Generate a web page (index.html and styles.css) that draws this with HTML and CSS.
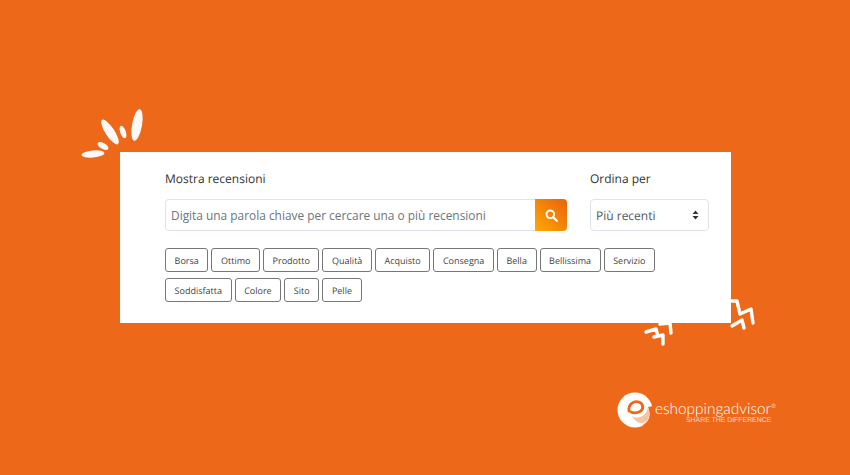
FILE: index.html
```html
<!DOCTYPE html>
<html lang="en">

<head>
    <meta charset="UTF-8">
    <meta name="viewport" content="width=device-width, initial-scale=1.0">
    <title>Mostra recensioni</title>
    <link rel="stylesheet" href="styles.css">
</head>

<body>
    <svg class="doodle" width="850" height="475" viewBox="0 0 850 475">
        <g fill="#fbf9f7">
            <ellipse cx="137" cy="125" rx="5" ry="16" transform="rotate(10 137 125)"/>
            <ellipse cx="110" cy="132" rx="4.5" ry="14.5" transform="rotate(-33 110 132)"/>
            <ellipse cx="123" cy="132" rx="2.8" ry="6.5" transform="rotate(-20 123 132)"/>
            <ellipse cx="103" cy="146" rx="6" ry="3" transform="rotate(30 103 146)"/>
            <ellipse cx="93" cy="154" rx="11.5" ry="3.5" transform="rotate(-5 93 154)"/>
        </g>
        <g fill="none" stroke="#fff" stroke-width="3.4" stroke-linecap="round" stroke-linejoin="round">
            <polyline points="732,301 737,301 740,314 751,309 753,323"/>
            <polyline points="732,326 742,320 744,328"/>
            <polyline points="646,332 656,329 658,336 654,337 663,335 663,344"/>
            <polyline points="660,324 670,323 671,333"/>
        </g>
    </svg>

    <div class="card">
        <div class="filters">
            <div class="search-col">
                <label class="field-label">Mostra recensioni</label>
                <div class="search-box">
                    <input class="search-input" type="text" placeholder="Digita una parola chiave per cercare una o più recensioni">
                    <button class="search-btn">
                        <svg width="13" height="13" viewBox="0 0 13 13">
                            <circle cx="5.3" cy="5.3" r="3.8" fill="none" stroke="#fff" stroke-width="1.9"/>
                            <line x1="8.2" y1="8.2" x2="11.8" y2="11.8" stroke="#fff" stroke-width="2.2" stroke-linecap="round"/>
                        </svg>
                    </button>
                </div>
            </div>
            <div class="sort-col">
                <label class="field-label">Ordina per</label>
                <div class="sort-box">
                    <span>Più recenti</span>
                    <svg width="7" height="10" viewBox="0 0 7 10">
                        <path d="M3.5 0.5 L6.5 4 H0.5 Z M3.5 9.5 L6.5 6 H0.5 Z" fill="#333"/>
                    </svg>
                </div>
            </div>
        </div>
        <div class="tags">
            <a class="tag">Borsa</a>
            <a class="tag">Ottimo</a>
            <a class="tag">Prodotto</a>
            <a class="tag">Qualità</a>
            <a class="tag">Acquisto</a>
            <a class="tag">Consegna</a>
            <a class="tag">Bella</a>
            <a class="tag">Bellissima</a>
            <a class="tag">Servizio</a>
            <a class="tag">Soddisfatta</a>
            <a class="tag">Colore</a>
            <a class="tag">Sito</a>
            <a class="tag">Pelle</a>
        </div>
    </div>

    <div class="logo">
        <svg class="logo-mark" width="37" height="37" viewBox="0 0 37 37">
            <circle cx="18" cy="18" r="17.5" fill="#fff"/>
            <path d="M31 15 C34 22 33 29 26 33 L36 33 L36 14 Z" fill="#ed6818"/>
            <path d="M12 19 C11 12 17 8.5 22 10 C27 12 27 18 22 20 C19 21 16 21 14 20" fill="none" stroke="#ed6818" stroke-width="2.8" stroke-linecap="round"/>
            <path d="M15 24 C22 28 29 24 31 15 C34 22 32 29 26 31 C22 32 18 29 15 24 Z" fill="#f7c4a3"/>
        </svg>
        <div class="logo-text">
            <div class="logo-name">eshoppingadvisor<sup>®</sup></div>
            <div class="logo-tag">SHARE THE DIFFERENCE</div>
        </div>
    </div>
</body>

</html>
```

FILE: styles.css
```css
body {
    font-family: 'Open Sans', Arial, sans-serif;
    background-color: #ed6818;
    color: #333;
    margin: 0;
    height: 475px;
    overflow: hidden;
    padding-top: 152px;
    box-sizing: border-box;
    text-rendering: geometricPrecision;
}

.doodle {
    position: absolute;
    top: 0;
    left: 0;
}

.card {
    width: 611px;
    height: 171px;
    margin-left: 120px;
    padding: 17px 22px 0 45px;
    box-sizing: border-box;
    background-color: #fff;
}

.filters {
    display: flex;
    gap: 23px;
}

.search-col {
    width: 402px;
}

.sort-col {
    width: 119px;
}

.field-label {
    display: block;
    font-size: 12px;
    line-height: 20px;
    margin-bottom: 10px;
    color: #333;
}

.search-box {
    display: flex;
    height: 32px;
}

.search-input {
    flex: 1;
    min-width: 0;
    box-sizing: border-box;
    height: 32px;
    padding: 0 5px;
    font-family: inherit;
    font-size: 11.9px;
    border: 1px solid #dfe4ec;
    border-right: none;
    border-radius: 4px 0 0 4px;
    outline: none;
}

.search-input::placeholder {
    color: #6c757d;
    opacity: 1;
}

.search-btn {
    width: 32px;
    height: 32px;
    padding: 0;
    border: none;
    border-radius: 0 4px 4px 0;
    background: linear-gradient(to top right, #ffa905, #e8620c);
    display: flex;
    align-items: center;
    justify-content: center;
}

.sort-box {
    height: 32px;
    box-sizing: border-box;
    border: 1px solid #dfe4ec;
    border-radius: 4px;
    padding: 0 9px 0 5px;
    display: flex;
    align-items: center;
    justify-content: space-between;
    font-size: 12px;
    color: #555;
}

.tags {
    display: flex;
    flex-wrap: wrap;
    gap: 6px 3px;
    margin-top: 17px;
}

.tag {
    height: 24px;
    box-sizing: border-box;
    padding: 0 8.6px;
    border: 1px solid #777;
    border-radius: 3px;
    font-size: 9px;
    line-height: 23px;
    color: #444;
}

.logo {
    margin: 69px 0 0 617px;
    display: flex;
    align-items: flex-start;
    color: #fff;
}

.logo-text {
    margin-left: 1px;
}

.logo-name {
    font-family: 'Lato', Arial, sans-serif;
    font-size: 15.4px;
    font-weight: 300;
    line-height: 16px;
    margin-top: 9px;
    white-space: nowrap;
}

.logo-name sup {
    font-size: 6px;
    line-height: 0;
}

.logo-tag {
    font-family: 'Liberation Sans', Arial, sans-serif;
    font-size: 6.9px;
    line-height: 8px;
    margin-left: 31px;
    color: #fbd9c2;
    white-space: nowrap;
}
```
